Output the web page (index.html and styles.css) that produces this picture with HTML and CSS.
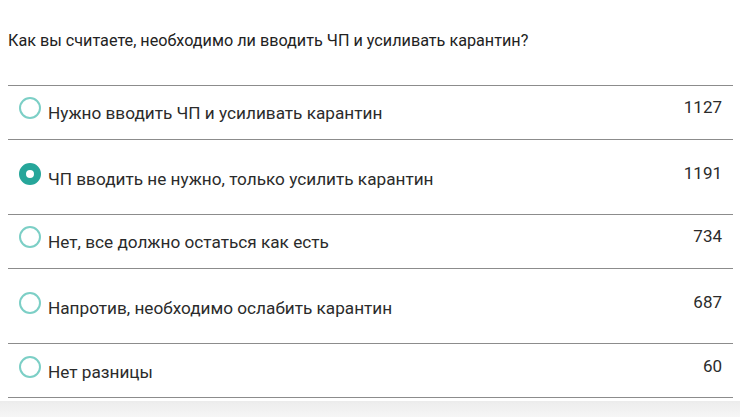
FILE: index.html
```html
<!DOCTYPE html>
<html lang="ru">
<head>
<meta charset="utf-8">
<title>Опрос</title>
<link rel="stylesheet" href="styles.css">
</head>
<body>
<div class="page">
  <div class="poll">
    <p class="question">Как вы считаете, необходимо ли вводить ЧП и усиливать карантин?</p>
    <ul class="options">
      <li class="option">
        <span class="radio"></span>
        <span class="label">Нужно вводить ЧП и усиливать карантин</span>
        <span class="count">1127</span>
      </li>
      <li class="option option--tall">
        <span class="radio radio--checked"></span>
        <span class="label">ЧП вводить не нужно, только усилить карантин</span>
        <span class="count">1191</span>
      </li>
      <li class="option">
        <span class="radio"></span>
        <span class="label">Нет, все должно остаться как есть</span>
        <span class="count">734</span>
      </li>
      <li class="option option--tall">
        <span class="radio"></span>
        <span class="label">Напротив, необходимо ослабить карантин</span>
        <span class="count">687</span>
      </li>
      <li class="option option--last">
        <span class="radio"></span>
        <span class="label">Нет разницы</span>
        <span class="count">60</span>
      </li>
    </ul>
  </div>
  <div class="footer"></div>
</div>
</body>
</html>
```
FILE: styles.css
```css
* { box-sizing: border-box; }
html, body { margin: 0; padding: 0; background: #fff; }
body {
  font-family: Roboto, "Noto Sans", Arial, sans-serif;
  color: #333;
  width: 740px;
  height: 417px;
  overflow: hidden;
}
.page { display: flex; flex-direction: column; height: 417px; }
.poll { padding: 0 7px 0 8px; flex: 0 0 auto; }
.question {
  margin: 0;
  padding-top: 31px;
  height: 85px;
  font-size: 16.2px;
  line-height: 20px;
  color: #222;
}
.options { list-style: none; margin: 0; padding: 0; border-bottom: 1px solid #8c8c8c; }
.option {
  display: flex;
  align-items: flex-start;
  border-top: 1px solid #8c8c8c;
  height: 54px;
  padding: 11px 11px 0 11px;
}
.option--tall { height: 75px; padding-top: 23px; }
.option--last { height: 54px; padding-top: 12px; }
.radio {
  flex: 0 0 auto;
  width: 22px;
  height: 22px;
  border-radius: 50%;
  border: 2px solid #7ccfc6;
  background: #fff;
}
.radio--checked { border: 7px solid #26a69a; }
.label {
  margin-left: 7px;
  margin-top: 6px;
  font-size: 17.2px;
  line-height: 20px;
  color: #2b2b2b;
  flex: 1 1 auto;
}
.count {
  font-size: 17px;
  line-height: 20px;
  color: #2b2b2b;
  margin-top: 0;
}
.footer {
  flex: 1 1 auto;
  margin-top: 3px;
  background: linear-gradient(#ececec, #f6f6f6);
}
```
